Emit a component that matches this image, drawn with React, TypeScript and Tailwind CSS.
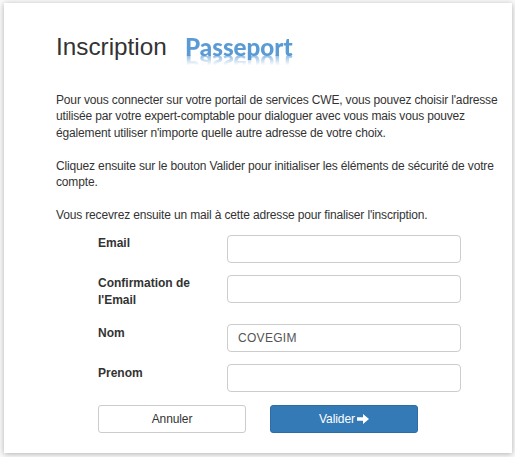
import React from "react";

const champs = [
  { name: "email", label: "Email", value: "", row: "h-[40px]" },
  { name: "confirmation", label: "Confirmation de l'Email", value: "", row: "h-[49px]" },
  { name: "nom", label: "Nom", value: "COVEGIM", row: "h-[40px]" },
  { name: "prenom", label: "Prenom", value: "", row: "h-[41px]" },
];

function Logo() {
  return (
    <span className="mt-[3px] ml-[17px] h-[24px] font-[Lato,sans-serif] text-[24.2px] leading-[24px] font-black text-[#5b9bd5] [-webkit-box-reflect:below_-7px_linear-gradient(transparent_45%,rgba(0,0,0,0.65)_85%)]">
      Passeport
    </span>
  );
}

function App() {
  const [valeurs, setValeurs] = React.useState(champs.map((c) => c.value));

  const handleChange = (index: number, value: string) => {
    setValeurs(valeurs.map((v, i) => (i === index ? value : v)));
  };

  return (
    <div className="h-screen overflow-hidden bg-[#fafafa] pt-[3px] pl-[4px] font-['Liberation_Sans',Arial,sans-serif] text-[12px] leading-[16.4px] text-[#333]">
      <div className="h-[450px] w-[508px] bg-white pt-[29px] pl-[52px] shadow-[0_1px_6px_rgba(0,0,0,0.3)]">
        <div className="flex h-[60px] items-start">
          <h1 className="w-[112px] text-[24.3px] leading-[30px] whitespace-nowrap">
            Inscription
          </h1>
          <Logo />
        </div>
        <div className="flex w-[450px] flex-col gap-[16.4px] tracking-[-0.155px] whitespace-nowrap">
          <p>
            Pour vous connecter sur votre portail de services CWE, vous pouvez choisir l'adresse
            <br />
            utilisée par votre expert-comptable pour dialoguer avec vous mais vous pouvez
            <br />
            également utiliser n'importe quelle autre adresse de votre choix.
          </p>
          <p>
            Cliquez ensuite sur le bouton Valider pour initialiser les éléments de sécurité de votre
            <br />
            compte.
          </p>
          <p>Vous recevrez ensuite un mail à cette adresse pour finaliser l'inscription.</p>
        </div>
        <form className="mt-[12px] ml-[42px]">
          {champs.map((champ, index) => (
            <div key={champ.name} className={"flex items-start " + champ.row}>
              <label
                htmlFor={champ.name}
                className={"w-[129px] pr-5 font-bold " + (index > 1 ? "mt-px" : "")}
              >
                {champ.label}
              </label>
              <input
                id={champ.name}
                type="text"
                value={valeurs[index]}
                onChange={(e) => handleChange(index, e.target.value)}
                className="h-[28px] w-[234px] rounded-[4px] border border-[#ccc] px-[10px] tracking-[0.3px] text-[#555]"
              />
            </div>
          ))}
          <div className="flex gap-[24px] tracking-[-0.1px]">
            <button type="button" className="h-[28px] w-[148px] rounded-[3px] border border-[#ccc]">
              Annuler
            </button>
            <button
              type="button"
              className="flex h-[28px] w-[148px] items-center justify-center gap-[2px] rounded-[3px] border border-[#2e6da4] bg-[#337ab7] text-white"
            >
              Valider
              <svg width="12" height="10" viewBox="0 0 12 10" fill="currentColor">
                <path d="M0 3.3h6V0l6 5-6 5V6.7H0z" />
              </svg>
            </button>
          </div>
        </form>
      </div>
    </div>
  );
}

export default App;
